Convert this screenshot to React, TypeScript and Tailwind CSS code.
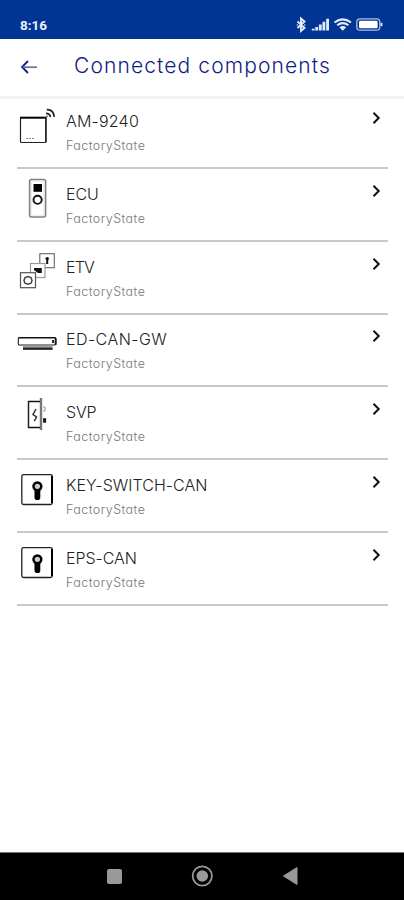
import type { ReactNode } from 'react';

function PanelIcon() {
  return (
    <svg width="40" height="46" viewBox="0 0 40 46" fill="none" stroke="#222">
      <rect x="3.5" y="15.5" width="25.5" height="25" rx="1" strokeWidth="1.2" />
      <path d="M3 15.7H29.5" stroke="#000" strokeWidth="2" />
      <path d="M28.8 16V40" strokeWidth="1.4" />
      <path d="M9 36.5H17" stroke="#888" strokeWidth="1.2" strokeDasharray="2 1" />
      <path d="M29.8 7.7Q36.5 7.5 37.2 14.8" strokeWidth="1.8" />
      <path d="M29 11.3Q32.9 11.3 33.4 15.2" strokeWidth="1.7" />
      <circle cx="30" cy="14.3" r=".8" fill="#222" stroke="none" />
    </svg>
  );
}

function EcuIcon() {
  return (
    <svg width="40" height="46" viewBox="0 0 40 46" fill="none">
      <rect x="12.6" y="4.5" width="16" height="37.5" rx="2" stroke="#808080" strokeWidth="1.6" />
      <rect x="14.5" y="6.3" width="12.2" height="34" rx="1" stroke="#ddd" strokeWidth=".6" />
      <rect x="16.5" y="9" width="8.5" height="7.8" fill="#000" />
      <circle cx="20.6" cy="24.8" r="4.1" stroke="#111" strokeWidth="1.9" />
    </svg>
  );
}

function EtvIcon() {
  return (
    <svg width="40" height="46" viewBox="0 0 40 46" fill="none">
      <rect x="22.8" y="5.7" width="14.5" height="14" stroke="#666" strokeWidth="1.1" fill="#fff" />
      <circle cx="30.2" cy="10.6" r="1.7" fill="#111" />
      <path d="M30.2 11V16" stroke="#111" strokeWidth="2" />
      <rect x="13.5" y="15.5" width="14.5" height="14" stroke="#999" strokeWidth="1.2" fill="#fff" />
      <path d="M17 20H24.8V25H21L17 22Z" fill="#111" />
      <rect x="3.5" y="24.7" width="15" height="15" stroke="#555" strokeWidth="1.2" fill="#fff" />
      <path d="M11 28.5L14 29.5L15 32.4L14 35.2L11 36.3L8 35.2L7 32.4L8 29.5Z" stroke="#444" strokeWidth="1.5" />
    </svg>
  );
}

function GatewayIcon() {
  return (
    <svg width="40" height="46" viewBox="0 0 40 46" fill="none">
      <rect x="1.3" y="17.5" width="37.5" height="7.5" rx="1.2" stroke="#222" strokeWidth="1.1" />
      <path d="M1.5 17.7H38.5" stroke="#111" strokeWidth="1.5" />
      <path d="M38.6 18V25M36 20V23" stroke="#111" strokeWidth="1.8" />
      <path d="M6 28H35.5" stroke="#777" strokeWidth="3.4" />
      <path d="M6 28.8H35.5" stroke="#222" strokeWidth="1.8" />
    </svg>
  );
}

function SvpIcon() {
  return (
    <svg width="40" height="46" viewBox="0 0 40 46" fill="none">
      <path d="M11 8.5H23M11 34.5H25" stroke="#111" strokeWidth="1.6" />
      <path d="M11.5 8V35" stroke="#222" strokeWidth="1.5" />
      <path d="M24 5V37" stroke="#777" strokeWidth="2.4" />
      <path d="M19 16L16 21.5L19.5 24L17.3 28.2" stroke="#333" strokeWidth="1.5" />
      <path d="M26 14H28V18H26" stroke="#999" />
      <path d="M27.6 25.2V29.7" stroke="#111" strokeWidth="3" />
    </svg>
  );
}

function KeyIcon() {
  return (
    <svg width="40" height="46" viewBox="0 0 40 46" fill="none">
      <rect x="4.8" y="8.7" width="30.5" height="29.8" rx="1.8" stroke="#222" strokeWidth="1.3" />
      <path d="M35 10V37" stroke="#000" strokeWidth="2" />
      <path d="M20.4 20V31.2" stroke="#000" strokeWidth="5.8" strokeLinecap="round" />
      <circle cx="20.4" cy="20.3" r="3.9" stroke="#000" strokeWidth="2.5" fill="#ccc" />
    </svg>
  );
}

const rows: { name: string; icon: ReactNode; style: string }[] = [
  { name: 'AM-9240', icon: <PanelIcon />, style: 'tracking-[0.2px]' },
  { name: 'ECU', icon: <EcuIcon />, style: 'tracking-[-0.1px]' },
  { name: 'ETV', icon: <EtvIcon />, style: 'tracking-[-0.8px]' },
  { name: 'ED-CAN-GW', icon: <GatewayIcon />, style: 'tracking-[0.45px]' },
  { name: 'SVP', icon: <SvpIcon />, style: 'tracking-[-0.2px]' },
  { name: 'KEY-SWITCH-CAN', icon: <KeyIcon />, style: 'tracking-[0.03px]' },
  { name: 'EPS-CAN', icon: <KeyIcon />, style: 'tracking-[-0.05px]' },
];

export default function App() {
  return (
    <div className="flex h-[900px] w-[404px] flex-col bg-white font-['Inter',sans-serif] [font-feature-settings:'cv11'_1]">
      <div className="flex h-[39px] shrink-0 items-start justify-between bg-[#003594] pt-[16px] pr-[19px] pl-[20px]">
        <span className="font-['Roboto',sans-serif] text-[13.5px] leading-[18px] font-bold text-[#e9effa]">8:16</span>
        <svg width="90" height="18" viewBox="0 0 90 18" fill="none" stroke="#e5ebf7">
          <path d="M2.5 5.5L9.5 12L6 15V2.5L9.5 5.5L2.5 12" strokeWidth="1.9" />
          <path d="M1.8 9H2.8M9.3 9H10.3" strokeWidth="1.5" />
          <path d="M18.2 14.5V12.8M21.7 14.5V11M25.3 14.5V8.5M28.9 14.5V5.8M32.6 14.5V2.8" strokeWidth="2.8" />
          <path d="M39.5 6.5Q47.8 .2 56 6.5M42.2 9.3Q47.8 5 53.4 9.3" strokeWidth="2" />
          <path d="M44.4 11.3Q47.8 8.8 51.2 11.3L47.8 14.8Z" fill="#e5ebf7" stroke="none" />
          <rect x="61.8" y="2.8" width="23" height="11.4" rx="3.2" stroke="#aebde0" strokeWidth="1.3" />
          <rect x="64" y="4.8" width="18.6" height="7.4" rx="1" fill="#fff" stroke="none" />
          <path d="M86.5 6.8V10.2" strokeWidth="1.8" />
        </svg>
      </div>

      <header className="flex h-[60px] shrink-0 items-start border-b-[3px] border-[#f3f3f3] pl-[20px] text-[#101d83]">
        <svg className="mt-[19px] shrink-0" width="18" height="18" viewBox="0 0 18 18" fill="none" stroke="#101d83">
          <path d="M8 3L2 9L8 15" strokeWidth="1.8" />
          <path d="M2.5 9.2H17" stroke="#68709f" strokeWidth="1.7" />
        </svg>
        <h1 className="mt-[13px] ml-[36px] text-[21px] leading-[28px] font-light tracking-[1.12px] whitespace-nowrap">Connected components</h1>
      </header>

      <main className="flex-1 pr-[16px] pl-[17px]">
        {rows.map((row) => (
          <div key={row.name} className="flex h-[72.8px] items-start border-b-2 border-[#c8c8c8] pt-[2.8px] first:h-[70px] first:pt-0">
            <div className="mt-[3px] h-[46px] w-[40px] shrink-0">{row.icon}</div>
            <div className="ml-[9px] flex-1 pt-[11px]">
              <div className={`w-fit text-[16px] leading-[22px] font-light whitespace-nowrap text-[#222] ${row.style}`}>{row.name}</div>
              <div className="mt-[5px] w-fit text-[12.5px] leading-[18px] font-light tracking-[0.45px] whitespace-nowrap text-[#777]">FactoryState</div>
            </div>
            <svg className="mt-[11px] mr-[5px]" width="14" height="16" viewBox="0 0 14 16" fill="none">
              <path d="M4.5 2.8L9.7 8L4.5 13.2" stroke="#111" strokeWidth="2" />
            </svg>
          </div>
        ))}
      </main>

      <nav className="h-[48px] shrink-0 border-t border-[#777] bg-black">
        <svg width="404" height="47" viewBox="0 0 404 47" fill="none">
          <rect x="107" y="16" width="15" height="15" rx="2" fill="#999" />
          <circle cx="202.3" cy="23" r="9.6" stroke="#999" strokeWidth="1.8" />
          <circle cx="202.3" cy="23" r="5.8" fill="#999" />
          <path d="M283.5 23L297 14.5V31.5Z" fill="#999" stroke="#999" />
        </svg>
      </nav>
    </div>
  );
}
